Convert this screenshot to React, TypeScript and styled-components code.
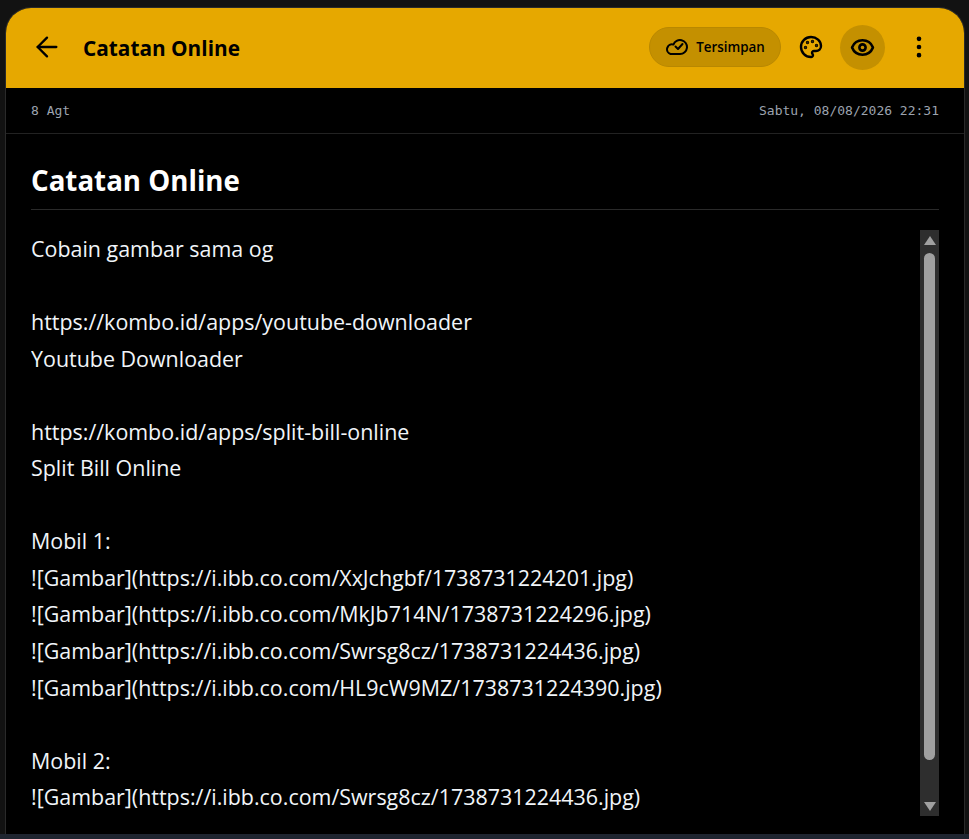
import styled, { createGlobalStyle } from "styled-components";
import { ArrowLeft, Eye, MoreVertical, Palette } from "lucide-react";

const lines = [
  "Cobain gambar sama og",
  "",
  "https://kombo.id/apps/youtube-downloader",
  "Youtube Downloader",
  "",
  "https://kombo.id/apps/split-bill-online",
  "Split Bill Online",
  "",
  "Mobil 1:",
  "![Gambar](https://i.ibb.co.com/XxJchgbf/1738731224201.jpg)",
  "![Gambar](https://i.ibb.co.com/MkJb714N/1738731224296.jpg)",
  "![Gambar](https://i.ibb.co.com/Swrsg8cz/1738731224436.jpg)",
  "![Gambar](https://i.ibb.co.com/HL9cW9MZ/1738731224390.jpg)",
  "",
  "Mobil 2:",
  "![Gambar](https://i.ibb.co.com/Swrsg8cz/1738731224436.jpg)",
];

function SavedCloud() {
  return (
    <svg width="23" height="18" viewBox="0 0 23 18" fill="none" stroke="currentColor" strokeWidth="2" strokeLinecap="round" strokeLinejoin="round">
      <path d="M5.5 16 H15 A7 7 0 1 0 8.4 6.6 A4.8 4.8 0 0 0 5.5 16 Z" />
      <path d="M10.5 8.5 l2.5 2.5 l4.5 -5" />
    </svg>
  );
}

export default function App() {
  return (
    <>
      <GlobalStyle />
      <Page>
        <Card>
          <Header>
            <IconButton aria-label="Kembali">
              <ArrowLeft size={32} strokeWidth={1.75} />
            </IconButton>
            <HeaderTitle>Catatan Online</HeaderTitle>
            <Actions>
              <SavedPill>
                <SavedCloud />
                Tersimpan
              </SavedPill>
              <IconButton aria-label="Tema">
                <Palette size={24} strokeWidth={2.4} />
              </IconButton>
              <IconButton aria-label="Pratinjau" $active>
                <Eye size={25} strokeWidth={2.5} />
              </IconButton>
              <MenuButton aria-label="Menu">
                <MoreVertical size={28} strokeWidth={2} />
              </MenuButton>
            </Actions>
          </Header>
          <MetaRow>
            <span>8 Agt</span>
            <span>Sabtu, 08/08/2026 22:31</span>
          </MetaRow>
          <Body>
            <NoteTitle>Catatan Online</NoteTitle>
            <NoteArea>
              <NoteText>
                {lines.map((line, i) => (
                  <NoteLine key={i}>{line}</NoteLine>
                ))}
              </NoteText>
              <ScrollRail>
                <ScrollArrow $dir="up" />
                <ScrollThumb />
                <ScrollArrow $dir="down" />
              </ScrollRail>
            </NoteArea>
          </Body>
        </Card>
        <BottomStrip />
      </Page>
    </>
  );
}

const GlobalStyle = createGlobalStyle`
  html, body {
    margin: 0;
    height: 100%;
    overflow: hidden;
    background: #121212;
    font-family: "Open Sans", "Noto Sans", "Liberation Sans", sans-serif;
  }
`;

const Page = styled.div`
  height: 839px;
  display: flex;
  flex-direction: column;
  padding-top: 7px;
  box-sizing: border-box;
`;

const Card = styled.main`
  flex: 1;
  min-height: 0;
  margin: 0 4px 0 5px;
  display: flex;
  flex-direction: column;
  overflow: hidden;
  background: #000;
  border: 1px solid #2a2a2a;
  border-bottom: 0;
  border-radius: 26px 26px 0 0;
`;

const BottomStrip = styled.div`
  height: 5px;
  background: #1f2530;
`;

const Header = styled.header`
  height: 80px;
  flex: none;
  box-sizing: border-box;
  display: flex;
  align-items: center;
  padding: 0 23px 2px 18px;
  background: #e6a800;
  color: #000;
`;

const IconButton = styled.button<{ $active?: boolean }>`
  width: 45px;
  height: 45px;
  flex: none;
  display: flex;
  align-items: center;
  justify-content: center;
  padding: 0;
  border: 0;
  border-radius: 50%;
  color: #000;
  background: ${(p) => (p.$active ? "#c49000" : "transparent")};
`;

const MenuButton = styled(IconButton)`
  margin-left: 4px;
`;

const HeaderTitle = styled.h1`
  margin: 1px 0 0 14px;
  font-size: 20.8px;
  font-weight: 700;
  color: #000;
`;

const Actions = styled.div`
  margin-left: auto;
  display: flex;
  align-items: center;
  gap: 7px;
`;

const SavedPill = styled.div`
  width: 132px;
  height: 40px;
  box-sizing: border-box;
  display: flex;
  align-items: center;
  justify-content: center;
  gap: 8px;
  background: #c49000;
  border: 1px solid #b98800;
  border-radius: 20px;
  font-size: 13.4px;
  font-weight: 600;
  color: #000;
`;

const MetaRow = styled.div`
  height: 46px;
  flex: none;
  box-sizing: border-box;
  display: flex;
  align-items: center;
  justify-content: space-between;
  padding: 0 25px;
  border-bottom: 1px solid #222;
  font-family: "DejaVu Sans Mono", "Liberation Mono", monospace;
  font-size: 13px;
  color: #9ca3af;
`;

const Body = styled.div`
  flex: 1;
  min-height: 0;
  display: flex;
  flex-direction: column;
  padding: 26px 25px 18px;
`;

const NoteTitle = styled.h2`
  margin: 0 0 20px;
  padding-bottom: 8px;
  border-bottom: 1px solid #2a2a2a;
  font-size: 27.7px;
  line-height: 41px;
  font-weight: 700;
  color: #fff;
`;

const NoteArea = styled.div`
  flex: 1;
  min-height: 0;
  display: flex;
`;

const NoteText = styled.div`
  flex: 1;
  min-width: 0;
  overflow: hidden;
  padding-top: 1px;
  font-size: 21.45px;
  line-height: 36.55px;
  color: #f1f5f9;
`;

const NoteLine = styled.div`
  min-height: 36.55px;
  white-space: pre;
`;

const ScrollRail = styled.div`
  width: 19px;
  flex: none;
  box-sizing: border-box;
  display: flex;
  flex-direction: column;
  align-items: center;
  padding: 6px 0 5px;
  background: #2e2e2e;
`;

const ScrollArrow = styled.div<{ $dir: "up" | "down" }>`
  width: 0;
  height: 0;
  flex: none;
  border-left: 6.5px solid transparent;
  border-right: 6.5px solid transparent;
  ${(p) =>
    p.$dir === "up"
      ? "border-bottom: 9px solid #a0a0a0;"
      : "border-top: 9px solid #a0a0a0; margin-top: auto;"}
`;

const ScrollThumb = styled.div`
  width: 11px;
  height: 507px;
  flex: none;
  margin-top: 8px;
  border-radius: 6px;
  background: #a0a0a0;
`;
